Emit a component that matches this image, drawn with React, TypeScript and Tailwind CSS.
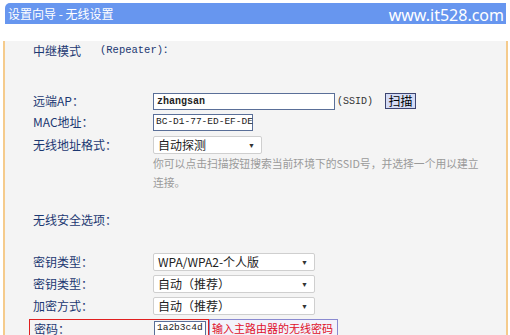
import React from "react";

const cjk = "font-['Noto_Sans_CJK_SC','Noto_Sans',sans-serif]";
const mono = "font-['Liberation_Mono','Noto_Sans_CJK_SC',monospace]";

const Label = ({ children }: { children: React.ReactNode }) => (
  <div className={`w-[120px] shrink-0 text-[12px] text-[#1c3872] whitespace-nowrap ${cjk}`}>{children}</div>
);

const Select = ({ value, width }: { value: string; width: string }) => (
  <div
    className={`${width} h-[18px] bg-white border border-[#cfcfcf] rounded-[2px] flex items-center justify-between pl-[4px] pr-[6px]`}
  >
    <span className={`text-[12px] text-[#222] leading-none whitespace-nowrap ${cjk}`}>{value}</span>
    <span className="text-[7px] text-[#333] leading-none">▼</span>
  </div>
);

const App = () => {
  return (
    <div className="w-[510px] h-[335px] bg-white overflow-hidden pt-[3px]">
      {/* Header */}
      <div className="ml-[5px] w-[501px] h-[21px] bg-[#6796ef] rounded-tl-[5px] flex items-center justify-between pl-[3px] pr-[2px]">
        <span className={`text-[12px] text-white ${cjk}`}>设置向导 - 无线设置</span>
        <span className="text-[16px] text-white font-['Noto_Sans',sans-serif] leading-none pt-[2px]">
          www.it528.com
        </span>
      </div>

      {/* Body */}
      <div className="ml-[3px] w-[505px] h-[320px] bg-[#f4f4f4] border-l-2 border-r-2 border-[#f5cb8c] pl-[28px]">
        <div className="h-[20px] mt-[17px] flex items-center">
          <span className={`w-[67px] text-[12px] text-[#1c3872] ${cjk}`}>中继模式</span>
          <span className={`text-[10.5px] text-[#1c3872] whitespace-nowrap ${mono}`}>(Repeater)：</span>
        </div>

        {/* 远端AP */}
        <div className="h-[18px] mt-[31px] flex items-center">
          <Label>远端AP：</Label>
          <div className="w-[182px] h-[17px] bg-white border border-[#5a6f98] flex items-center pl-[3px]">
            <span className={`text-[10px] font-bold text-[#222] ${mono}`}>zhangsan</span>
          </div>
          <span className={`ml-[2px] w-[48px] text-[10px] text-[#333] ${mono}`}>(SSID)</span>
          <div className={`w-[31px] h-[16px] bg-[#d5dcf5] border border-[#3c4470] flex items-center justify-center text-[12px] text-black ${cjk}`}>
            扫描
          </div>
        </div>

        {/* MAC */}
        <div className="h-[18px] mt-[3px] flex items-center">
          <Label>MAC地址：</Label>
          <div className="w-[100px] h-[17px] bg-white border border-[#5a6f98] flex items-center pl-[2px]">
            <span className={`text-[9.5px] text-[#222] whitespace-nowrap ${mono}`}>BC-D1-77-ED-EF-DE</span>
          </div>
        </div>

        {/* 无线地址格式 */}
        <div className="h-[18px] mt-[5px] flex items-center">
          <Label>无线地址格式：</Label>
          <Select value="自动探测" width="w-[109px]" />
        </div>

        {/* hint */}
        <div className={`ml-[120px] w-[340px] text-[10.8px] leading-[19px] text-[#9a9a9a] ${cjk}`}>
          <div className="whitespace-nowrap">你可以点击扫描按钮搜索当前环境下的SSID号，并选择一个用以建立</div>
          <div>连接。</div>
        </div>

        <div className="h-[20px] mt-[18px] flex items-center">
          <Label>无线安全选项：</Label>
        </div>

        <div className="h-[18px] mt-[23px] flex items-center">
          <Label>密钥类型：</Label>
          <Select value="WPA/WPA2-个人版" width="w-[162px]" />
        </div>
        <div className="h-[18px] mt-[4px] flex items-center">
          <Label>密钥类型：</Label>
          <Select value="自动（推荐）" width="w-[162px]" />
        </div>
        <div className="h-[18px] mt-[4px] flex items-center">
          <Label>加密方式：</Label>
          <Select value="自动（推荐）" width="w-[162px]" />
        </div>

        {/* 密码 */}
        <div className="mt-[4px] flex items-center -ml-[4px]">
          <div className="w-[180px] h-[19px] border border-[#e02020] flex items-center pl-[4px]">
            <Label>密码：</Label>
            <div className="w-[52px] h-[16px] bg-white border border-[#5a6f98] flex items-center pl-[2px]">
              <span className={`text-[9.5px] text-[#222] whitespace-nowrap ${mono}`}>1a2b3c4d</span>
            </div>
          </div>
          <div className={`h-[19px] w-[129px] bg-[#f3f3fb] border border-[#8a8ad0] flex items-center pl-[2px] text-[11px] text-[#e0102a] whitespace-nowrap ${cjk}`}>
            输入主路由器的无线密码
          </div>
        </div>
      </div>
    </div>
  );
};

export default App;
